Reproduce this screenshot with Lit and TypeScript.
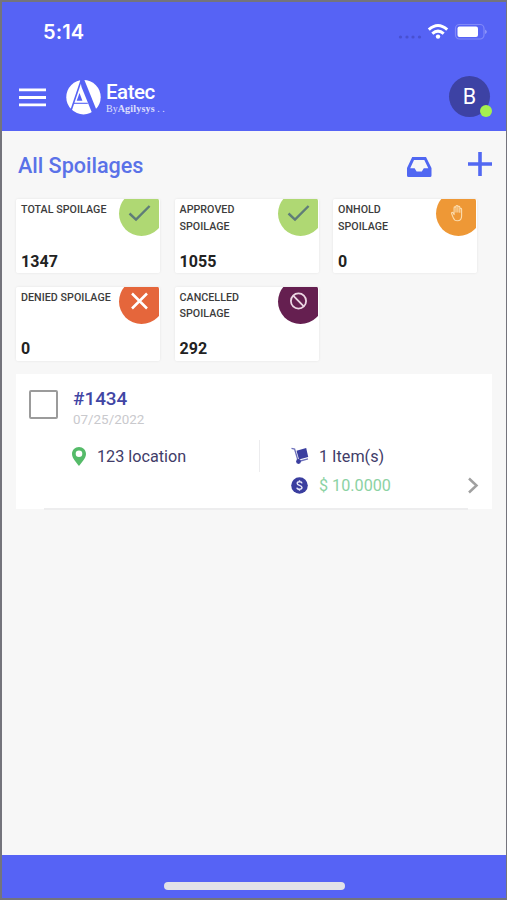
import { LitElement, html, css, svg } from "lit";
import { customElement, property } from "lit/decorators.js";

type Kind = "check" | "hold" | "cross" | "ban";

const glyphs: Record<Kind, unknown> = {
  check: svg`<path d="M10.5 22.5 L17 28.6 L30.6 15" fill="none" stroke="#5f7d78" stroke-width="2.4"/>`,
  cross: svg`<path d="M13 14.5 L28 29.5 M28 14.5 L13 29.5" fill="none" stroke="#fff" stroke-width="2.5"/>`,
  ban: svg`<g fill="none" stroke="#ecd6e4" stroke-width="1.8"><circle cx="20.5" cy="22" r="7.6"/><path d="M15.2 16.7 L25.8 27.3"/></g>`,
  hold: svg`<path d="M15.6 22.5 L17.2 26.6 C18 29 19.6 29.8 21.4 29.8 C24.3 29.8 25.6 27.8 25.6 25 V18.3 C25.6 17.1 23.8 17.1 23.8 18.3 V16.2 C23.8 15 21.9 15 21.9 16.2 V15.4 C21.9 14.2 20 14.2 20 15.4 V16.8 C20 15.6 18.1 15.6 18.1 16.8 V23.6 L17.2 22 C16.6 21 15.2 21.4 15.6 22.5 Z M20 16.8 V21.5 M21.9 16.2 V21.5 M23.8 18.3 V21.8" fill="none" stroke="#fbdcae" stroke-width="1.1" stroke-linejoin="round"/>`,
};

@customElement("stat-card")
export class StatCard extends LitElement {
  @property() label = "";
  @property() value = "";
  @property() kind: Kind = "check";

  static styles = css`
    :host { display: block; }
    .card {
      position: relative; box-sizing: border-box; height: 74px; padding: 3px 0 0 5px;
      display: flex; flex-direction: column; justify-content: space-between;
      background: #fff; border-radius: 2px; overflow: hidden; border-right: 1px solid #fff;
    }
    .wrap { border-radius: 3px; box-shadow: 0 0 2px 1px rgba(0, 0, 0, 0.04); }
    .label { width: 93px; font-size: 10.7px; line-height: 16.5px; font-weight: 500; color: #3c3c3c; letter-spacing: 0.04px; }
    .value { font-size: 16px; line-height: 19px; padding-bottom: 2.5px; font-weight: 700; color: #222; letter-spacing: 0.05px; }
    .badge { position: absolute; top: -8px; right: -5px; width: 45px; height: 45px; border-radius: 50%; }
    .badge svg { display: block; width: 45px; height: 45px; }
    .check { background: #afd873; }
    .hold { background: #ee9836; }
    .cross { background: #e5663b; }
    .ban { background: #651f50; }
  `;

  render() {
    return html`<div class="wrap"><div class="card">
      <div class="label">${this.label}</div>
      <div class="value">${this.value}</div>
      <div class="badge ${this.kind}"><svg viewBox="0 0 45 45">${glyphs[this.kind]}</svg></div>
    </div></div>`;
  }
}

@customElement("app-root")
export class AppRoot extends LitElement {
  private stats: { label: string; value: string; kind: Kind }[] = [
    { label: "TOTAL SPOILAGE", value: "1347", kind: "check" },
    { label: "APPROVED SPOILAGE", value: "1055", kind: "check" },
    { label: "ONHOLD SPOILAGE", value: "0", kind: "hold" },
    { label: "DENIED SPOILAGE", value: "0", kind: "cross" },
    { label: "CANCELLED SPOILAGE", value: "292", kind: "ban" },
  ];

  static styles = css`
    :host {
      display: flex; flex-direction: column; box-sizing: border-box; width: 507px; height: 900px;
      border: solid #74747c; border-width: 2px 1px 2px 2px;
      background: #f7f7f7; font-family: Roboto, "Noto Sans", sans-serif; overflow: hidden;
    }
    svg { display: block; flex: none; }
    .top { height: 129px; background: #5663f5; color: #fff; flex: none; }
    .status { height: 60px; display: flex; align-items: center; padding: 0 18px 0 41px; }
    .time { flex: 1; font-family: Inter, sans-serif; font-weight: 600; font-size: 20px; letter-spacing: 0.1px; }
    .bar { height: 69px; display: flex; align-items: center; padding: 0 17px; }
    .logo { margin-left: 20px; }
    .brand { margin-left: 5px; flex: 1; padding-top: 3px; }
    .name { font-size: 20.5px; line-height: 20px; font-weight: 500; letter-spacing: -0.5px; }
    .by { font-family: "Liberation Serif", serif; font-size: 10px; line-height: 13px; opacity: 0.8; white-space: nowrap; }
    .by b { letter-spacing: 0.2px; }
    .avatar {
      position: relative; width: 41px; height: 41px; margin-right: -1px; border-radius: 50%; background: #3d42a4;
      display: flex; align-items: center; justify-content: center; font-size: 21.5px;
    }
    .dot { position: absolute; right: -2px; bottom: 0; width: 12px; height: 12px; border-radius: 50%; background: #a5f04f; }
    .title { height: 68px; display: flex; align-items: center; padding: 0 13px 0 16px; flex: none; box-sizing: border-box; }
    h1 { margin: 0; flex: 1; font-size: 21.6px; font-weight: 500; color: #5a72e8; letter-spacing: -0.02px; }
    .plus { margin-left: 35px; margin-top: -2px; }
    .tray { margin-top: 3px; }
    .grid { display: grid; grid-template-columns: repeat(3, 144px); gap: 13.5px 14.5px; padding-left: 14px; flex: none; }
    .item {
      position: relative; box-sizing: border-box; margin: 13.5px 14px 0 14px; height: 135px; background: #fff;
      display: grid; grid-template-columns: 57px 187px 1fr; grid-template-rows: 66px 1fr; flex: none;
    }
    .rule { position: absolute; left: 28px; right: 24px; bottom: -1px; height: 2px; background: #ededee; }
    .box { box-sizing: border-box; width: 29px; height: 29px; margin: 16px 0 0 13px; border: 2px solid #9b9b9b; border-radius: 2px; }
    .head { grid-column: 2 / 4; padding-top: 13px; }
    .id { font-size: 18.9px; line-height: 23px; font-weight: 500; color: #4145a4; }
    .date { font-size: 13.4px; line-height: 19px; color: #c9c9cd; }
    .place { grid-column: 2; height: 32px; display: flex; align-items: center; border-right: 1px solid #ececee; }
    .place svg { margin-left: -1px; }
    .place span { margin-left: 11px; }
    .text { font-size: 16.2px; color: #413c68; }
    .facts { grid-column: 3; padding-left: 31px; padding-top: 2px; display: flex; flex-direction: column; }
    .fact { display: flex; align-items: center; height: 29px; gap: 10px; }
    .money { color: #8bd2a3; }
    .arrow { margin-left: auto; margin-right: 13px; }
    .foot { margin-top: auto; height: 43px; background: #5663f5; flex: none; display: flex; justify-content: center; align-items: flex-end; }
    .home { width: 181px; height: 8px; border-radius: 4px; background: #e2e2e8; margin-bottom: 8px; }
  `;

  render() {
    return html`
      <div class="top">
        <div class="status">
          <div class="time">5:14</div>
          <svg width="90" height="24" viewBox="398 20 90 24">
            <g fill="#4850d0"><circle cx="400.5" cy="37" r="1.6"/><circle cx="407" cy="37" r="1.6"/><circle cx="413" cy="37" r="1.6"/><circle cx="419.5" cy="37" r="1.6"/></g>
            <g fill="none" stroke="#fff" stroke-width="3"><path d="M428.8 29.7 Q438 21.3 447.2 29.7"/><path d="M432.3 33.6 Q438 28.6 443.7 33.6"/></g>
            <circle cx="438" cy="36.600" r="2.200" fill="#fff"/>
            <rect x="455.5" y="24.5" width="28.5" height="14.5" rx="4" fill="none" stroke="#8089f8" stroke-width="1.2"/>
            <rect x="457.5" y="26.5" width="20.5" height="10.5" rx="2" fill="#fff"/>
            <path d="M485.3 29.5 Q488 31.8 485.3 34 Z" fill="#a5abf9"/>
          </svg>
        </div>
        <div class="bar">
          <svg width="27" height="20" viewBox="0 0 27 20"><path d="M0 2.8H27M0 10.5H27M0 17.8H27" stroke="#fff" stroke-width="2.8"/></svg>
          <svg class="logo" width="35" height="36" viewBox="0 0 35 36">
            <circle cx="17.5" cy="18.2" r="17.2" fill="#fff"/>
            <path d="M14 0 H18 L30.5 31 L26.300 34.500 L15.500 8 Z" fill="#5663f5"/>
            <path d="M15.300 1 L5 31.500" stroke="#5663f5" stroke-width="1.600"/>
            <path d="M8 24.300 H21.800" stroke="#5663f5" stroke-width="1.1"/>
            <path d="M13.500 14 L16.400 21.800 H10.700 Z" fill="#5663f5"/>
          </svg>
          <div class="brand"><div class="name">Eatec</div><div class="by">By<b>Agilysys</b> . .</div></div>
          <div class="avatar">B<div class="dot"></div></div>
        </div>
      </div>
      <div class="title">
        <h1>All Spoilages</h1>
        <svg class="tray" width="26" height="22" viewBox="0 0 26 22">
          <path fill-rule="evenodd" fill="#5067f2" d="M6.2 1 H20 L25.5 12 V19.5 Q25.5 21 24 21 H2.5 Q1 21 1 19.5 V12 Z M8 4 L4.2 12.3 H8.6 L10.6 15.5 H15.8 L17.8 12.3 H22.3 L18.3 4 Z"/>
        </svg>
        <svg class="plus" width="26" height="26" viewBox="0 0 26 26"><path d="M1 13H25M13 1V25" stroke="#5268f2" stroke-width="3.6"/></svg>
      </div>
      <div class="grid">
        ${this.stats.map((s) => html`<stat-card .label=${s.label} .value=${s.value} .kind=${s.kind}></stat-card>`)}
      </div>
      <div class="item">
        <div class="box"></div>
        <div class="head"><div class="id">#1434</div><div class="date">07/25/2022</div></div>
        <div class="place">
          <svg width="14" height="19" viewBox="0 0 14 19"><path fill-rule="evenodd" fill="#55bb69" d="M7 0 C11 0 14 3 14 6.9 C14 11 9.5 15.5 7 19 C4.5 15.5 0 11 0 6.9 C0 3 3 0 7 0 Z M7 3.5 A3.3 3.3 0 1 0 7 10.1 A3.3 3.3 0 1 0 7 3.5 Z"/></svg>
          <span class="text">123 location</span>
        </div>
        <div class="facts">
          <div class="fact">
            <svg width="18" height="20" viewBox="0 0 18 20">
              <path d="M0.5 1.3 L3.6 2 L7 13.5 M7.5 14.5 L17 11.8" fill="none" stroke="#6d70ba" stroke-width="1.3"/>
              <path d="M5.500 3.800 L15.200 1 L17.200 10 L8 12.600 Z" fill="#3a3e9f"/><circle cx="7.5" cy="14.5" r="2.4" fill="#3a3e9f"/>
            </svg>
            <span class="text">1 Item(s)</span>
          </div>
          <div class="fact">
            <svg width="18" height="18" viewBox="0 0 18 18"><circle cx="8.5" cy="8.500" r="8.3" fill="#3a3e9f"/>
              <path d="M11 6.300 C10.7 4.300 6.2 4.200 6.2 6.500 C6.2 8.800 11 8 11 10.500 C11 12.900 6.2 12.800 5.9 10.600 M8.5 3.200 V5 M8.5 12 V13.800" fill="none" stroke="#e8e8f8" stroke-width="1.4"/></svg>
            <span class="text money">$ 10.0000</span>
            <svg class="arrow" width="12" height="18" viewBox="0 0 12 18"><path d="M2 1.500 L9.5 8.500 L2 15.500" fill="none" stroke="#a0a0a0" stroke-width="2.5"/></svg>
          </div>
        </div>
        <div class="rule"></div>
      </div>
      <div class="foot"><div class="home"></div></div>
    `;
  }
}
